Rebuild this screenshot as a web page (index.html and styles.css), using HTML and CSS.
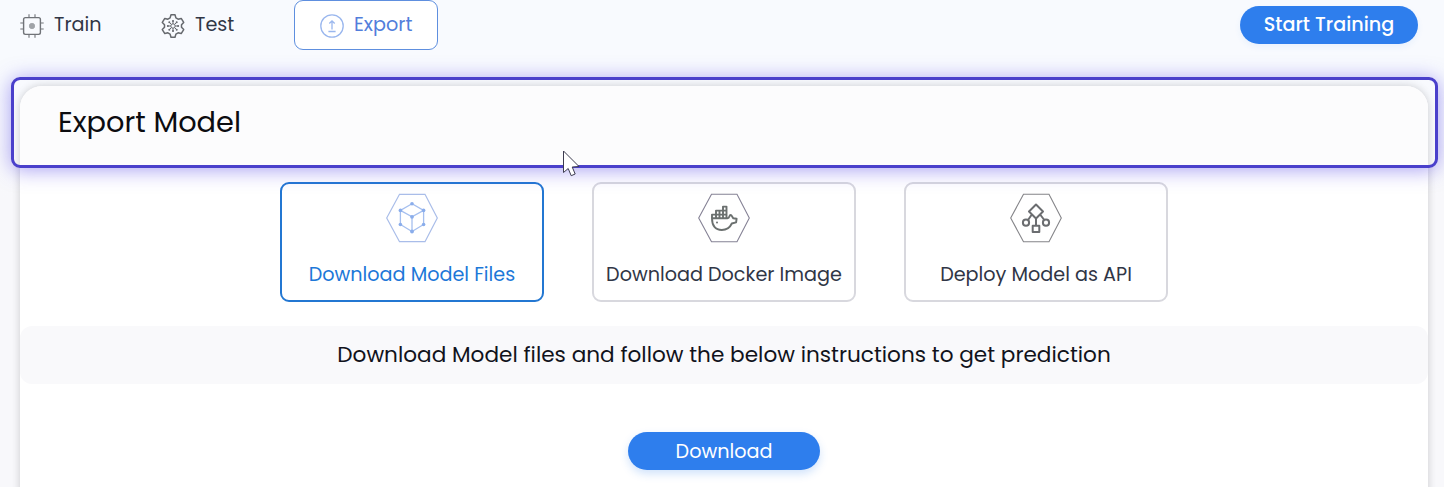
FILE: index.html
```html
<!DOCTYPE html>
<html lang="en">
<head>
<meta charset="utf-8">
<title>Export Model</title>
<link rel="stylesheet" href="styles.css">
</head>
<body>
<header class="topbar">
  <nav class="tabs">
    <a class="tab tab-train">
      <svg class="tab-icon" viewBox="0 0 24 24" fill="none" stroke="#707378" stroke-width="1.1"><rect x="3.6" y="3.6" width="16.8" height="16.8" rx="1.8" stroke-width="1.4"/><path d="M9 .3v3.3M15 .3v3.3M9 20.4v3.3M15 20.4v3.3M.3 9h3.3M.3 15h3.3M20.4 9h3.3M20.4 15h3.3"/><circle cx="12" cy="12" r="2.7" fill="#a0a3a8" stroke="#a0a3a8" stroke-width=".8"/></svg>
      <span>Train</span>
    </a>
    <a class="tab tab-test">
      <svg class="tab-icon" viewBox="0 0 24 24" fill="none" stroke="#66696e" stroke-width="1.5" stroke-linejoin="round"><path d="M10 .8h4l.9 3.1 2.2 1.3 3.1-.8 2.5 4-2.2 2.3v2.6l2.2 2.3-2.5 4-3.1-.8-2.2 1.3-.9 3.1h-4l-.9-3.1-2.2-1.3-3.1.8-2.5-4 2.2-2.3v-2.6L1.3 8.4l2.5-4 3.1.8 2.2-1.3z"/><g stroke-width="1"><circle cx="12" cy="12" r="2.2"/><path d="M12 6.500v3.300M12 14.200v3.300M6.500 12h3.300M14.200 12h3.300M8.100 8.100l2.300 2.300M13.600 13.600l2.300 2.300M15.900 8.100l-2.300 2.300M10.400 13.600l-2.300 2.300"/></g><g fill="#66696e" stroke="none"><circle cx="12" cy="6.900" r="1"/><circle cx="12" cy="17.100" r="1"/><circle cx="6.900" cy="12" r="1"/><circle cx="17.100" cy="12" r="1"/><circle cx="8.300" cy="8.300" r="1"/><circle cx="15.700" cy="8.300" r="1"/><circle cx="8.300" cy="15.700" r="1"/><circle cx="15.700" cy="15.700" r="1"/></g></svg>
      <span>Test</span>
    </a>
    <a class="tab tab-export">
      <svg class="tab-icon" viewBox="0 0 24 24" fill="none" stroke="#9ab7ee" stroke-width="1.3"><circle cx="12" cy="12" r="11.2"/><path d="M12 15.5V7.200M9.300 9.500 12 6.800l2.700 2.700M8.400 17.500h7.200"/></svg>
      <span>Export</span>
    </a>
  </nav>
  <button class="pill start">Start Training</button>
</header>

<main class="panel">
  <div class="panel-head"><h1>Export Model</h1></div>
  <section class="options">
    <article class="option selected">
      <svg class="hex" viewBox="0 0 52 50" fill="none"><path d="M.7 25 13.500 1.300h25.500L51.300 25 39 48.700H13.500z" stroke="#a9bde9" stroke-width="1.200"/><g stroke="#a5bfef" stroke-width="1.300"><path d="M26 10.700 14.400 17.400v14.100L26 38.500l11.600-7V17.400zM14.400 17.400 26 23.800l11.600-6.400M26 23.800v14.700"/></g><g fill="#8aadeb"><circle cx="26" cy="10.700" r="1.800"/><circle cx="14.400" cy="17.400" r="1.800"/><circle cx="37.600" cy="17.400" r="1.800"/><circle cx="26" cy="23.800" r="1.900"/><circle cx="14.400" cy="31.500" r="1.800"/><circle cx="37.600" cy="31.500" r="1.800"/><circle cx="26" cy="38.500" r="1.900"/></g></svg>
      <span>Download Model Files</span>
    </article>
    <article class="option">
      <svg class="hex" viewBox="0 0 52 50" fill="none"><path d="M.7 25 13.500 1.300h25.500L51.300 25 39 48.700H13.500z" stroke="#858295" stroke-width="1.100"/><g stroke="#6b706f" stroke-width="1.900" stroke-linejoin="round"><path d="M14 25.300h15.500c2.500 0 1.500-3.300 3-3.300s1.600 2.200 2.800 3.300l3.300.5-.5 3.500-4.300 1.200c-1.900 4.100-5.200 6.500-10 6.500-6.500 0-9.800-4.200-9.800-11.700z"/><path d="M14 25.300v-3.700h4v-4h7v-4h3.500v11.700M18 21.600v3.700M21.500 17.600v7.700M25 17.600v7.700M18 21.600h10.500M25 17.600h3.500"/></g><circle cx="19" cy="29.500" r="1" fill="#6b706f"/></svg>
      <span>Download Docker Image</span>
    </article>
    <article class="option">
      <svg class="hex" viewBox="0 0 52 50" fill="none"><path d="M.7 25 13.500 1.300h25.500L51.300 25 39 48.700H13.500z" stroke="#858589" stroke-width="1.100"/><g stroke="#6b6d70" stroke-width="2" stroke-linejoin="round"><path d="m26 11.500 7 7-7 7-7-7zM26 25.500v7M21.500 22l-3.500 5M30.500 22l3.800 5"/><circle cx="16" cy="29.700" r="3.100"/><circle cx="36" cy="29.700" r="3.100"/><path d="M22.700 32.700h6.600V39h-6.600z"/></g></svg>
      <span>Deploy Model as API</span>
    </article>
  </section>
  <div class="notice">Download Model files and follow the below instructions to get prediction</div>
  <button class="pill download">Download</button>
</main>

<div class="highlight"></div>
<svg class="cursor" viewBox="0 0 18 28"><path d="M1.500 1v21.500l4.700-4 3 7.200 4-1.700-3-7 6.800-.5z" fill="#fff" stroke="#3d3c50" stroke-width="1" stroke-linejoin="round"/></svg>
</body>
</html>
```
FILE: styles.css
```css
* { box-sizing: border-box; }
body {
  position: relative;
  margin: 0;
  height: 487px;
  overflow: hidden;
  background: linear-gradient(#f8fafe 0, #f8fafe 80px, #f8f8fb 200px);
  font-family: Poppins, Inter, sans-serif;
  font-size: 19.2px;
  color: #303646;
}
span, h1 { white-space: nowrap; }
.topbar {
  display: flex;
  justify-content: space-between;
  align-items: flex-start;
  height: 86px;
  padding: 0 26px 0 20px;
}
.tabs { display: flex; height: 50px; }
.tab { display: flex; align-items: center; gap: 10px; }
.tab span { padding-bottom: 2px; }
.tab-icon { width: 24px; height: 24px; margin-top: 2px; flex: none; }
.tab-train { width: 141px; }
.tab-test { width: 133px; }
.tab-export {
  width: 144px;
  padding-left: 25px;
  border: 1px solid #5e8fdf;
  border-radius: 9px;
  background: #fff;
  color: #527edb;
}
.pill {
  display: flex;
  align-items: center;
  justify-content: center;
  height: 38px;
  padding: 0;
  border: 0;
  border-radius: 19px;
  background: #2e7eed;
  color: #fff;
  font: inherit;
}
.start { width: 178px; margin-top: 6px; padding-bottom: 2px; font-weight: 500; box-shadow: 0 3px 6px #2e7eed12; }
.panel {
  height: 420px;
  margin: 0 16px 0 20px;
  border-radius: 22px 22px 0 0;
  background: #fff;
  box-shadow: 0 0 8px #00000030;
}
.panel-head {
  display: flex;
  align-items: center;
  height: 80px;
  padding: 0 0 7px 38px;
  border-radius: 22px 22px 0 0;
  background: #fcfcfd;
}
h1 { margin: 0; font-size: 28.8px; font-weight: 400; color: #0c0c10; }
.options { display: flex; justify-content: center; gap: 48px; padding-top: 16px; }
.option {
  display: flex;
  flex-direction: column;
  align-items: center;
  width: 264px;
  height: 120px;
  padding-top: 9px;
  border: 2px solid #d8d8de;
  border-radius: 9px;
  background: #fff;
}
.option span { margin-top: 20px; line-height: 24px; }
.selected { border-color: #2377d2; color: #1d78d8; }
.hex { width: 52px; height: 50px; flex: none; }
.notice {
  display: flex;
  align-items: center;
  justify-content: center;
  height: 58px;
  margin-top: 24px;
  padding-bottom: 2px;
  border-radius: 12px;
  background: #f9f9fb;
  color: #11131b;
  font-size: 21.6px;
}
.download { width: 192px; margin: 48px auto 0; box-shadow: 0 4px 8px #2e7eed38; }
.highlight {
  position: absolute;
  left: 11px;
  top: 77px;
  width: 1427px;
  height: 91px;
  border: 3px solid #4a40cb;
  border-radius: 9px;
  box-shadow: 0 2px 20px #5b4ce888;
}
.cursor { position: absolute; left: 562px; top: 150px; width: 18px; height: 28px; }
```
